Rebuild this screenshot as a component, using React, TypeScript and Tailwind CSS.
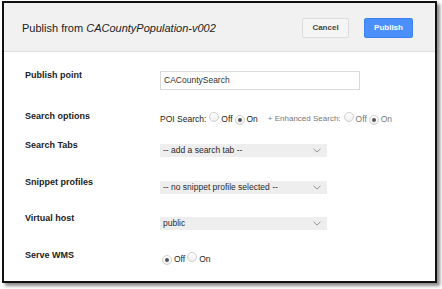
import { ReactNode } from 'react'

function Radio({ checked }: { checked?: boolean }) {
  return (
    <span className="inline-flex h-[10px] w-[10px] items-center justify-center rounded-full border border-[#cfcfcf] bg-gradient-to-b from-white to-[#efefef]">
      {checked && <span className="h-[4px] w-[4px] rounded-full bg-[#555]" />}
    </span>
  )
}

function Select({ value }: { value: string }) {
  return (
    <div className="flex h-[13px] w-[167px] items-center justify-between bg-[#eeeeee] pl-[3px] pr-[4px] text-[8.5px] text-[#2a2a2a]">
      <span>{value}</span>
      <svg width="8" height="5" viewBox="0 0 8 5" className="mr-[2px]">
        <path d="M0.5 0.8 L4 4 L7.5 0.8" fill="none" stroke="#8a8a8a" strokeWidth="0.9" />
      </svg>
    </div>
  )
}

function Row({ label, h, mt, children }: { label: string; h: string; mt: string; children: ReactNode }) {
  return (
    <div className={`flex ${h}`}>
      <div className="w-[135px] text-[9px] font-bold leading-[12px] text-[#222]">{label}</div>
      <div className={mt}>{children}</div>
    </div>
  )
}

export default function App() {
  return (
    <div className="h-[289px] w-[442px] bg-white pl-[2px] pt-[1px]" style={{ fontFamily: '"Liberation Sans", Arial, sans-serif' }}>
      <div className="flex h-[282px] w-[435px] flex-col border-2 border-[#111] bg-white shadow-[3px_3px_3px_rgba(0,0,0,0.45)]">
        <div className="flex h-[49px] items-center justify-between border-b border-[#dedede] bg-[#f1f1f1] pl-[18px] pr-[22px] pt-[2px]">
          <div className="text-[11px] text-[#222]">
            Publish from <span className="italic">CACountyPopulation-v002</span>
          </div>
          <div className="flex gap-[15px]">
            <button className="h-[20px] w-[47px] rounded-[2px] border border-[#dcdcdc] bg-[#f5f5f5] text-[8px] font-bold text-[#444]">Cancel</button>
            <button className="h-[20px] w-[49px] rounded-[2px] border border-[#3d82f4] bg-[#4a8ffc] text-[8px] font-bold text-white">Publish</button>
          </div>
        </div>
        <div className="pl-[21px] pt-[17px]">
          <Row label="Publish point" h="h-[41px]" mt="mt-[2px]">
            <div className="flex h-[19px] w-[200px] items-center border border-[#dadada] bg-white pl-[3px] text-[8.5px] text-[#333]">CACountySearch</div>
          </Row>
          <Row label="Search options" h="h-[29px]" mt="mt-[2px]">
            <div className="flex items-center text-[8.5px] leading-[12px] text-[#222]">
              <span>POI Search:</span>
              <span className="ml-[3px]"><Radio /></span>
              <span className="ml-[2px]">Off</span>
              <span className="ml-[2px]"><Radio checked /></span>
              <span className="ml-[2px]">On</span>
              <span className="ml-[10px] text-[8px] text-[#777]">+ Enhanced Search:</span>
              <span className="ml-[3px]"><Radio /></span>
              <span className="ml-[2px] text-[#777]">Off</span>
              <span className="ml-[2px]"><Radio checked /></span>
              <span className="ml-[2px] text-[#777]">On</span>
            </div>
          </Row>
          <Row label="Search Tabs" h="h-[37px]" mt="mt-[5px]">
            <Select value="-- add a search tab --" />
          </Row>
          <Row label="Snippet profiles" h="h-[36px]" mt="mt-[5px]">
            <Select value="-- no snippet profile selected --" />
          </Row>
          <Row label="Virtual host" h="h-[37px]" mt="mt-[5px]">
            <Select value="public" />
          </Row>
          <Row label="Serve WMS" h="h-[20px]" mt="mt-[3px]">
            <div className="flex items-center text-[8.5px] leading-[12px] text-[#222]">
              <span className="ml-[2px]"><Radio checked /></span>
              <span className="ml-[2px]">Off</span>
              <span className="ml-[2px]"><Radio /></span>
              <span className="ml-[2px]">On</span>
            </div>
          </Row>
        </div>
      </div>
    </div>
  )
}
